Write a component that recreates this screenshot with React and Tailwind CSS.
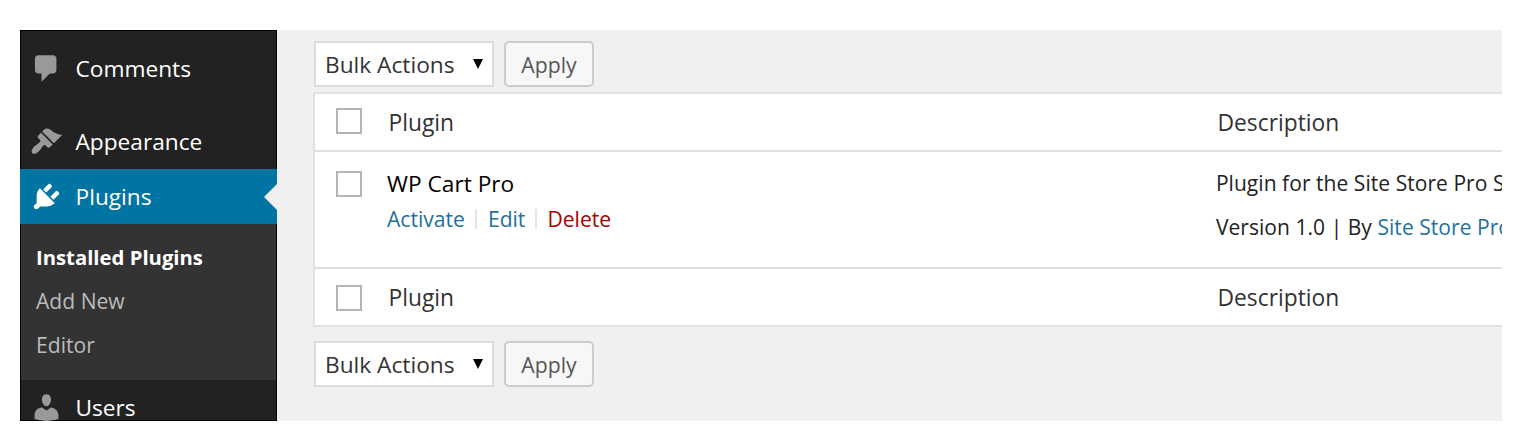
const icons = {
  comments: 'M5 2h9c1.1 0 2 .9 2 2v7c0 1.1-.9 2-2 2h-2l-5 5v-5H5c-1.1 0-2-.9-2-2V4c0-1.1.9-2 2-2z',
  appearance:
    'M14.48 11.06L7.41 3.99l1.5-1.5c.5-.56 2.3-.47 3.51.32 1.21.8 1.43 1.28 2.91 2.1 1.18.64 2.45 1.26 4.45.85zm-.71.71L6.7 4.7 4.93 6.47c-.39.39-.39 1.02 0 1.41l1.06 1.06c.39.39.39 1.03 0 1.42-.6.6-1.43 1.11-2.21 1.69-.35.26-.7.53-1.01.84C1.43 14.23.4 16.08 1.4 17.07c.99 1 2.84-.03 4.18-1.36.31-.31.58-.66.85-1.02.57-.78 1.08-1.61 1.69-2.21.39-.39 1.02-.39 1.41 0l1.06 1.06c.39.39 1.02.39 1.41 0z',
  plugins:
    'M13.11 4.36L9.87 7.6 8 5.73l3.24-3.24c.35-.34 1.05-.2 1.56.32.52.51.66 1.21.31 1.55zm-8 1.77l.91-1.12 9.01 9.01-1.19.84c-.71.71-2.63 1.16-3.82 1.16H6.14L4.9 17.26c-.59.59-1.54.59-2.12 0-.59-.58-.59-1.53 0-2.12l1.24-1.24v-3.88c0-1.13.4-3.19 1.09-3.89zm7.26 3.97l3.24-3.24c.34-.35 1.04-.21 1.55.31.52.51.66 1.21.31 1.55l-3.24 3.25z',
  users:
    'M10 9.25c-2.27 0-2.73-3.44-2.73-3.44C7 4.02 7.82 2 9.97 2c2.16 0 2.98 2.02 2.71 3.81 0 0-.41 3.44-2.68 3.44zm0 2.57L12.72 10c2.39 0 4.52 2.33 4.52 4.53v2.49s-3.65 1.13-7.24 1.13c-3.65 0-7.24-1.13-7.24-1.13v-2.49c0-2.25 1.94-4.48 4.47-4.48z',
};

function MenuItem({ icon, label, active = false, className = '' }) {
  return (
    <a
      className={`relative flex h-[55px] shrink-0 items-center text-[22.7px] text-white ${active ? '-mx-px bg-[#0074a2] pl-[10px]' : 'pl-[9px]'} ${className}`}
    >
      <svg viewBox="0 0 20 20" className={`size-[33px] shrink-0 ${active ? 'fill-white' : 'fill-[#999]'}`}>
        <path d={icons[icon]} />
      </svg>
      <span className="ml-[12.5px] pt-[2px] leading-none">{label}</span>
      {active && (
        <svg viewBox="0 0 13 26" className="absolute top-[15px] right-0 h-[26px] w-[13px] fill-[#f0f0f0]">
          <path d="M13 0v26L0 13z" />
        </svg>
      )}
    </a>
  );
}

function Sidebar() {
  return (
    <nav className="flex w-[257px] shrink-0 flex-col border border-black bg-[#222] pt-[10px]">
      <MenuItem icon="comments" label="Comments" />
      <MenuItem icon="appearance" label="Appearance" className="mt-[18px]" />
      <MenuItem icon="plugins" label="Plugins" active />
      <ul className="shrink-0 bg-[#333] pt-[11px] pb-[13px] pl-[15px] text-[21.1px] leading-[44px] text-[#bbb]">
        <li className="text-[20.3px] font-bold text-white">Installed Plugins</li>
        <li>Add New</li>
        <li>Editor</li>
      </ul>
      <MenuItem icon="users" label="Users" />
    </nav>
  );
}

function BulkActions({ className = '' }) {
  return (
    <div className={`flex h-[46px] gap-[10px] pl-[1px] ${className}`}>
      <div className="flex w-[180px] items-center border-2 border-[#ddd] bg-white pl-[10px] text-[22.7px] text-[#333]">
        <span className="-ml-px pt-[3px] leading-none">Bulk Actions</span>
        <svg viewBox="0 0 10 10" className="ml-auto mr-[9px] size-[10px] fill-black">
          <path d="M0 0h10L5 10z" />
        </svg>
      </div>
      <button className="w-[90px] rounded-[5px] border-2 border-[#ccc] bg-[#f7f7f7] pt-[2px] text-[21.2px] leading-none text-[#555]">
        Apply
      </button>
    </div>
  );
}

function Checkbox() {
  return <span className="block size-[26px] border-2 border-[#b4b4b4] bg-white" />;
}

function HeadingRow({ className = '', boxClassName = '' }) {
  return (
    <div className={`flex items-center pl-[21px] text-[22.8px] text-[#333] ${className}`}>
      <div className={boxClassName}>
        <Checkbox />
      </div>
      <span className="ml-[26.5px] w-[829px] leading-none">Plugin</span>
      <span className="leading-none">Description</span>
    </div>
  );
}

export default function App() {
  return (
    <div className="h-[447px] bg-white px-5 pt-[30px] font-['Open_Sans',sans-serif]">
      <div className="flex h-[391px] w-[1482px] overflow-hidden bg-[#f0f0f0]">
        <Sidebar />
        <main className="min-w-0 flex-1 overflow-hidden pt-[11px] pl-9 whitespace-nowrap">
          <BulkActions />
          <section className="mt-[5px] h-[235px] w-[1200px] border-2 border-[#e2e2e2] bg-white">
            <HeadingRow className="h-[56px] pt-[2px]" boxClassName="-mt-[4px]" />
            <div className="flex h-[119px] border-y-2 border-[#dfdfdf] pl-[21px]">
              <div className="pt-[19px]">
                <Checkbox />
              </div>
              <div className="ml-[25px] w-[830px] pt-[14px]">
                <div className="text-[22.7px] leading-[35px] text-black">WP Cart Pro</div>
                <div className="flex text-[21.1px] leading-[35px] text-[#1f6f9f]">
                  <span>Activate</span>
                  <span className="mr-[11px] ml-[10px] mt-[8px] h-[20px] w-[2px] bg-[#e4e4ec]" />
                  <span>Edit</span>
                  <span className="mx-[10px] mt-[8px] h-[20px] w-[2px] bg-[#e4e4ec]" />
                  <span className="text-[#a00]">Delete</span>
                </div>
              </div>
              <div className="pt-[9px] text-[21px] leading-[44px] tracking-[0.05px] text-[#222]">
                <p>Plugin for the Site Store Pro S</p>
                <p>
                  Version 1.0 | By <span className="text-[#1f6f9f]">Site Store Pro</span>
                </p>
              </div>
            </div>
            <HeadingRow className="h-[56px] pt-[2px]" />
          </section>
          <BulkActions className="mt-[14px]" />
        </main>
      </div>
    </div>
  );
}
